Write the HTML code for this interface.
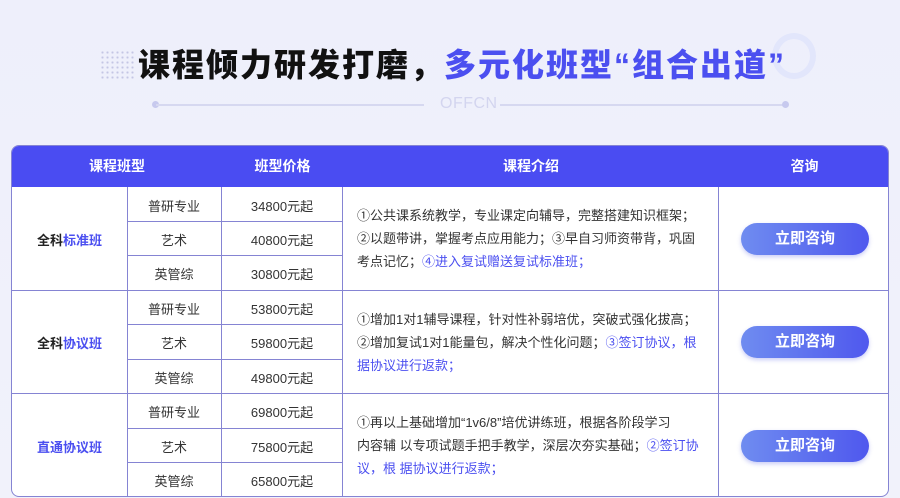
<!DOCTYPE html>
<html><head><meta charset="utf-8"><style>
*{margin:0;padding:0;box-sizing:border-box}
body{width:900px;height:498px;overflow:hidden;background:linear-gradient(180deg,#eeeffb 0%,#f1f2fb 100%);font-family:"Liberation Sans","Noto Sans CJK SC",sans-serif;position:relative;color:#333}
.title{position:absolute;left:138px;top:45px;font-size:32px;font-weight:900;letter-spacing:2px;color:#111;white-space:nowrap;line-height:40px}
.title span{color:#4b4ff0}
.dots{position:absolute;left:100px;top:50px;width:34px;height:30px;background-image:radial-gradient(#c4c6e4 1px,transparent 1.2px);background-size:5px 5px}
.ring{position:absolute;left:772px;top:33px;width:44px;height:46px;border-radius:50%;border:6px solid #e2e6fb}
.line{position:absolute;top:104px;height:2px;background:#d6d8f0}
.dot{position:absolute;top:101px;width:7px;height:7px;border-radius:50%;background:#c7c9ee}
.offcn{position:absolute;left:440px;top:95px;font-size:16px;color:#d3d5ef;letter-spacing:0.5px}
.tbl{position:absolute;left:11px;top:145px;width:878px;height:352px;background:#fff;border-radius:8px;overflow:hidden;border:1px solid #8584d3}
.hd{position:absolute;left:0;top:0;width:100%;height:41px;background:#4a4cf2;color:#fff;font-weight:bold;font-size:14px}
.hd div{position:absolute;top:0;line-height:41px;text-align:center}
.c{position:absolute;text-align:center;font-size:13px;color:#333}
.vl{position:absolute;width:1px;background:#8584d3}
.hl{position:absolute;height:1px;background:#8584d3}
.desc{position:absolute;left:345px;font-size:13px;line-height:23px;color:#333;white-space:nowrap}
.b{color:#4b4ff0}
.btn{position:absolute;left:729px;width:128px;height:32px;border-radius:16px;background:linear-gradient(90deg,#6f8cf0,#4f58ee);color:#fff;font-weight:bold;font-size:15px;text-align:center;line-height:32px;box-shadow:0 2px 4px rgba(80,90,230,.3)}
</style></head><body>
<div class="dots"></div>
<div class="ring"></div>
<div class="title">课程倾力研发打磨，<span>多元化班型“组合出道”</span></div>
<div class="dot" style="left:152px"></div>
<div class="line" style="left:156px;width:268px"></div>
<div class="offcn">OFFCN</div>
<div class="line" style="left:500px;width:284px"></div>
<div class="dot" style="left:782px"></div>
<div class="tbl">
<div class="hd"><div style="left:0;width:210px">课程班型</div><div style="left:210px;width:121px">班型价格</div><div style="left:331px;width:376px">课程介绍</div><div style="left:707px;width:171px">咨询</div></div>
<div class="vl" style="left:115px;top:41px;height:311px"></div>
<div class="vl" style="left:209px;top:41px;height:311px"></div>
<div class="vl" style="left:330px;top:41px;height:311px"></div>
<div class="vl" style="left:706px;top:41px;height:311px"></div>
<div class="hl" style="left:0;top:144px;width:878px"></div>
<div class="hl" style="left:0;top:247px;width:878px"></div>
<div class="hl" style="left:115px;top:75px;width:215px"></div>
<div class="hl" style="left:115px;top:109px;width:215px"></div>
<div class="hl" style="left:115px;top:178px;width:215px"></div>
<div class="hl" style="left:115px;top:213px;width:215px"></div>
<div class="hl" style="left:115px;top:282px;width:215px"></div>
<div class="hl" style="left:115px;top:316px;width:215px"></div>

<div class="c" style="left:0;width:115px;top:84px;font-weight:bold;color:#222">全科<span class="b">标准班</span></div>
<div class="c" style="left:0;width:115px;top:187px;font-weight:bold;color:#222">全科<span class="b">协议班</span></div>
<div class="c" style="left:0;width:115px;top:291px;font-weight:bold" ><span class="b">直通协议班</span></div>

<div class="c" style="left:115px;width:94px;top:50px">普研专业</div>
<div class="c" style="left:115px;width:94px;top:84px">艺术</div>
<div class="c" style="left:115px;width:94px;top:118px">英管综</div>
<div class="c" style="left:115px;width:94px;top:153px">普研专业</div>
<div class="c" style="left:115px;width:94px;top:187px">艺术</div>
<div class="c" style="left:115px;width:94px;top:222px">英管综</div>
<div class="c" style="left:115px;width:94px;top:256px">普研专业</div>
<div class="c" style="left:115px;width:94px;top:291px">艺术</div>
<div class="c" style="left:115px;width:94px;top:325px">英管综</div>

<div class="c" style="left:210px;width:120px;top:50px">34800元起</div>
<div class="c" style="left:210px;width:120px;top:84px">40800元起</div>
<div class="c" style="left:210px;width:120px;top:118px">30800元起</div>
<div class="c" style="left:210px;width:120px;top:153px">53800元起</div>
<div class="c" style="left:210px;width:120px;top:187px">59800元起</div>
<div class="c" style="left:210px;width:120px;top:222px">49800元起</div>
<div class="c" style="left:210px;width:120px;top:256px">69800元起</div>
<div class="c" style="left:210px;width:120px;top:291px">75800元起</div>
<div class="c" style="left:210px;width:120px;top:325px">65800元起</div>

<div class="desc" style="top:58px">①公共课系统教学，专业课定向辅导，完整搭建知识框架；<br>②以题带讲，掌握考点应用能力；③早自习师资带背，巩固<br>考点记忆；<span class="b">④进入复试赠送复试标准班；</span></div>
<div class="desc" style="top:162px">①增加1对1辅导课程，针对性补弱培优，突破式强化拔高；<br>②增加复试1对1能量包，解决个性化问题；<span class="b">③签订协议，根</span><br><span class="b">据协议进行返款；</span></div>
<div class="desc" style="top:265px">①再以上基础增加“1v6/8”培优讲练班，根据各阶段学习<br>内容辅 以专项试题手把手教学，深层次夯实基础；<span class="b">②签订协</span><br><span class="b">议，根 据协议进行返款；</span></div>

<div class="btn" style="top:77px">立即咨询</div>
<div class="btn" style="top:180px">立即咨询</div>
<div class="btn" style="top:284px">立即咨询</div>
</div>
</body></html>
